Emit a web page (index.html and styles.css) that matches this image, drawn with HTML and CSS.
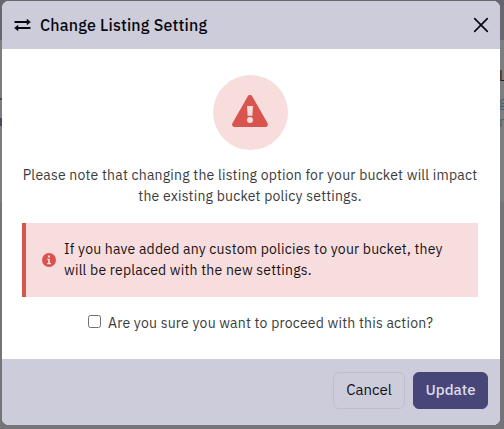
FILE: index.html
```
<!DOCTYPE html>
<html lang="en">
<head>
<meta charset="utf-8">
<title>Change Listing Setting</title>
<link rel="stylesheet" href="styles.css">
</head>
<body>
<div class="modal" role="dialog">
  <header class="modal-header">
    <svg class="swap" viewBox="0 0 17 14"><path d="M.5 4h13M3.500 10h13" stroke="#08080c" stroke-width="2"/><path d="M13 1.200 16.500 4 13 6.800zM4 7.200.500 10 4 12.800z" fill="#08080c" stroke="#08080c" stroke-width=".5" stroke-linejoin="round"/></svg>
    <h1 class="title">Change Listing Setting</h1>
    <svg class="close" viewBox="0 0 16 16"><path d="m1.700 1.700 12.600 12.600M14.300 1.700 1.700 14.300" stroke="#090911" stroke-width="1.700" stroke-linecap="round"/></svg>
  </header>
  <main class="modal-body">
    <div class="warning">
      <svg class="triangle" viewBox="0 0 36 32"><path d="M15.800 1.200a2.500 2.500 0 0 1 4.400 0L35.600 28.300A2.500 2.500 0 0 1 33.400 32H2.600A2.500 2.500 0 0 1 .4 28.300z" fill="#d9534f"/><path d="M15 11h6l-.6 9.800h-4.800z" fill="#f8dddd"/><circle cx="18" cy="25" r="3" fill="#f8dddd"/></svg>
    </div>
    <p class="message">Please note that changing the listing option for your bucket will impact<br>the existing bucket policy settings.</p>
    <div class="alert">
      <svg class="info" viewBox="0 0 14 14"><circle cx="7" cy="7" r="7" fill="#d9534f"/><path d="M5.300 5.800h2.500v4.300H9v1.100H5.200v-1.100h1V6.900h-.9zM6 2.600h1.900v1.900H6z" fill="#fae3e3"/></svg>
      <p class="alert-text">If you have added any custom policies to your bucket, they<br>will be replaced with the new settings.</p>
    </div>
    <label class="confirm"><input class="check" type="checkbox"><span class="question">Are you sure you want to proceed with this action?</span></label>
  </main>
  <footer class="modal-footer">
    <button class="btn cancel">Cancel</button>
    <button class="btn update">Update</button>
  </footer>
</div>
<div class="behind"><span class="letter">L</span><span class="link">g</span><span class="link">n</span></div>
<div class="behind-left"></div>
</body>
</html>
```
FILE: styles.css
```
* { box-sizing: border-box; }
body {
  margin: 0;
  width: 504px;
  height: 429px;
  overflow: hidden;
  position: relative;
  padding: 1px 4px 4px 2px;
  background: linear-gradient(#67666d 0, #67666d 40px, #7d7e80 40px, #7d7e80 202px, #757579 202px);
  font-family: "IBM Plex Sans", Roboto, sans-serif;
  font-size: 14px;
  color: #3b3b3d;
}
.modal {
  position: relative;
  z-index: 1;
  display: flex;
  flex-direction: column;
  width: 498px;
  height: 424px;
  border-radius: 7px;
  overflow: hidden;
  background: #fff;
}
.modal-header {
  display: flex;
  align-items: center;
  height: 48px;
  flex: none;
  padding: 0 11px 0 12px;
  background: #cdccdb;
}
.swap { width: 17px; height: 14px; }
.title {
  flex: 1;
  margin: 0 0 0 9px;
  font-size: 16px;
  font-weight: 500;
  line-height: 24px;
  letter-spacing: .2px;
  color: #08080c;
  white-space: nowrap;
}
.close { width: 16px; height: 16px; fill: none; }
.modal-body {
  flex: 1;
  display: flex;
  flex-direction: column;
  align-items: center;
  padding: 26px 22px 0 20px;
}
.warning {
  display: flex;
  justify-content: center;
  width: 75px;
  height: 75px;
  flex: none;
  padding-top: 20px;
  border-radius: 50%;
  background: #f8dddd;
}
.triangle { width: 36px; height: 32px; }
.message, .alert-text, .question {
  margin: 0;
  line-height: 21px;
  letter-spacing: .2px;
  white-space: nowrap;
}
.message { margin-top: 15px; text-align: center; }
.alert {
  display: flex;
  align-items: center;
  width: 456px;
  height: 74px;
  margin-top: 16px;
  padding-left: 16px;
  border-left: 4px solid #d9534f;
  background: #f7dddd;
  color: #171214;
}
.info { width: 14px; height: 14px; margin-right: 8px; }
.confirm {
  display: flex;
  align-items: center;
  align-self: flex-start;
  margin: 16px 0 0 66px;
  height: 21px;
}
.check {
  appearance: none;
  width: 13px;
  height: 13px;
  margin: 0 7px 5px 0;
  border: 1px solid #707074;
  border-radius: 2.500px;
  background: #fff;
}
.modal-footer {
  display: flex;
  justify-content: flex-end;
  gap: 8px;
  height: 66px;
  flex: none;
  padding: 13px 12px 0;
  background: #cdccdb;
}
.btn {
  height: 37px;
  padding: 0 0 1px;
  border: 1px solid #bfbecb;
  border-radius: 6px;
  font: 500 15px/22px "IBM Plex Sans", Roboto, sans-serif;
}
.cancel { width: 72px; background: transparent; color: #111116; font-weight: 400; }
.update { width: 75px; background: #484579; border-color: #484579; color: #dedded; }
.behind {
  position: absolute;
  left: 499px;
  top: 67px;
  display: flex;
  flex-direction: column;
  line-height: 19px;
}
.letter { color: #222228; height: 26px; }
.link { color: #3d6670; height: 20px; }
.behind-left {
  position: absolute;
  left: 0;
  top: 98px;
  width: 2px;
  height: 28px;
  border: solid #484861;
  border-width: 2px 0 8px;
}
```
